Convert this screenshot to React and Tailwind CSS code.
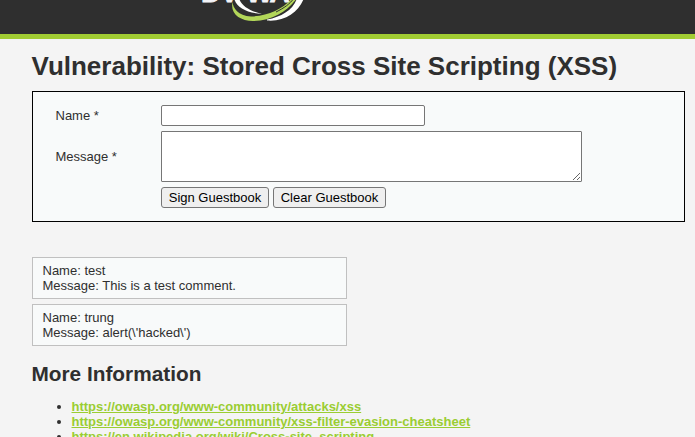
const entries = [
  { name: "test", message: "This is a test comment." },
  { name: "trung", message: "alert(\\'hacked\\')" },
];

const links = [
  "https://owasp.org/www-community/attacks/xss",
  "https://owasp.org/www-community/xss-filter-evasion-cheatsheet",
  "https://en.wikipedia.org/wiki/Cross-site_scripting",
];

function Logo() {
  return (
    <svg className="ml-[190px] block" width="130" height="34" viewBox="0 0 130 34" aria-label="DVWA">
      <text x="11 30 56 79.5" y="2" fontSize="28" fontWeight="bold" fill="#f4f4f8" stroke="#f4f4f8" strokeWidth="0.8" fontFamily="Liberation Sans, sans-serif">DVWA</text>
      <path d="M44 -2 C46 7 56 13 72 14 C60 11 51 6 49 -2 Z" fill="#fff" />
      <path d="M42.5 2 C43 8 48 16 61 16.5 C78 16 95 8 102 -2 L107 -2 C98 11 82 21 63 21 C50 21 40 14 42.5 2 Z" fill="#b2d659" />
      <path d="M86 12 C94 8 100 4 104 -2" fill="none" stroke="#2f2f2f" strokeWidth="1" />
      <path d="M77 19.5 C92 17 104 9 107 -2 L114 -2 C109 12 95 22 77 20.5 Z" fill="#fff" />
    </svg>
  );
}

function GuestbookForm() {
  const button =
    "h-[21px] rounded-[3px] border border-[#767676] bg-[#efefef] pl-px text-center text-[13px] leading-[19px] whitespace-nowrap text-black";
  return (
    <form className="h-[131px] w-[653px] border border-black bg-[#f8fafa] pt-[13px] pl-[23px]">
      <div className="flex h-[21px] items-center">
        <label htmlFor="name" className="w-[105px]">Name *</label>
        <input id="name" className="h-[21px] w-[264px] rounded-[2px] border border-[#767676] bg-white px-[2px] outline-none" />
      </div>
      <div className="mt-[5px] flex h-[51px] items-center">
        <label htmlFor="message" className="w-[105px]">Message *</label>
        <textarea id="message" className="h-[51px] w-[421px] resize rounded-[1px] border border-[#767676] bg-white p-[2px] outline-none" />
      </div>
      <div className="mt-[5px] ml-[105px] flex gap-[4px]">
        <button type="button" className={button + " w-[108px]"}>Sign Guestbook</button>
        <button type="button" className={button + " w-[113px]"}>Clear Guestbook</button>
      </div>
    </form>
  );
}

export default function App() {
  return (
    <div className="h-[437px] w-[695px] overflow-hidden bg-[#f4f4f4] font-['Liberation_Sans',Arial,sans-serif] text-[13px] leading-[15px] text-[#2f2f2f]">
      <header className="h-[39px] overflow-hidden border-b-[5px] border-[#a1cc33] bg-[#2f2f2f]">
        <Logo />
      </header>
      <main className="pl-[31.5px]">
        <h1 className="pt-[12px] text-[26px] leading-[30px] font-bold">Vulnerability: Stored Cross Site Scripting (XSS)</h1>
        <div className="mt-[10px]">
          <GuestbookForm />
        </div>
        <div className="mt-[35px] flex flex-col gap-[5px]">
          {entries.map((e) => (
            <div key={e.name} className="h-[42px] w-[315px] border border-[#c0c0c0] bg-[#f8fafa] px-[10px] py-[5px]">
              <div>Name: {e.name}</div>
              <div>Message: {e.message}</div>
            </div>
          ))}
        </div>
        <h2 className="mt-[16px] text-[20.8px] leading-[24px] font-bold">More Information</h2>
        <ul className="mt-[13px] list-disc pl-[40px]">
          {links.map((l) => (
            <li key={l}>
              <a href="#" className="font-bold text-[#9acd32] underline">{l}</a>
            </li>
          ))}
        </ul>
      </main>
    </div>
  );
}
